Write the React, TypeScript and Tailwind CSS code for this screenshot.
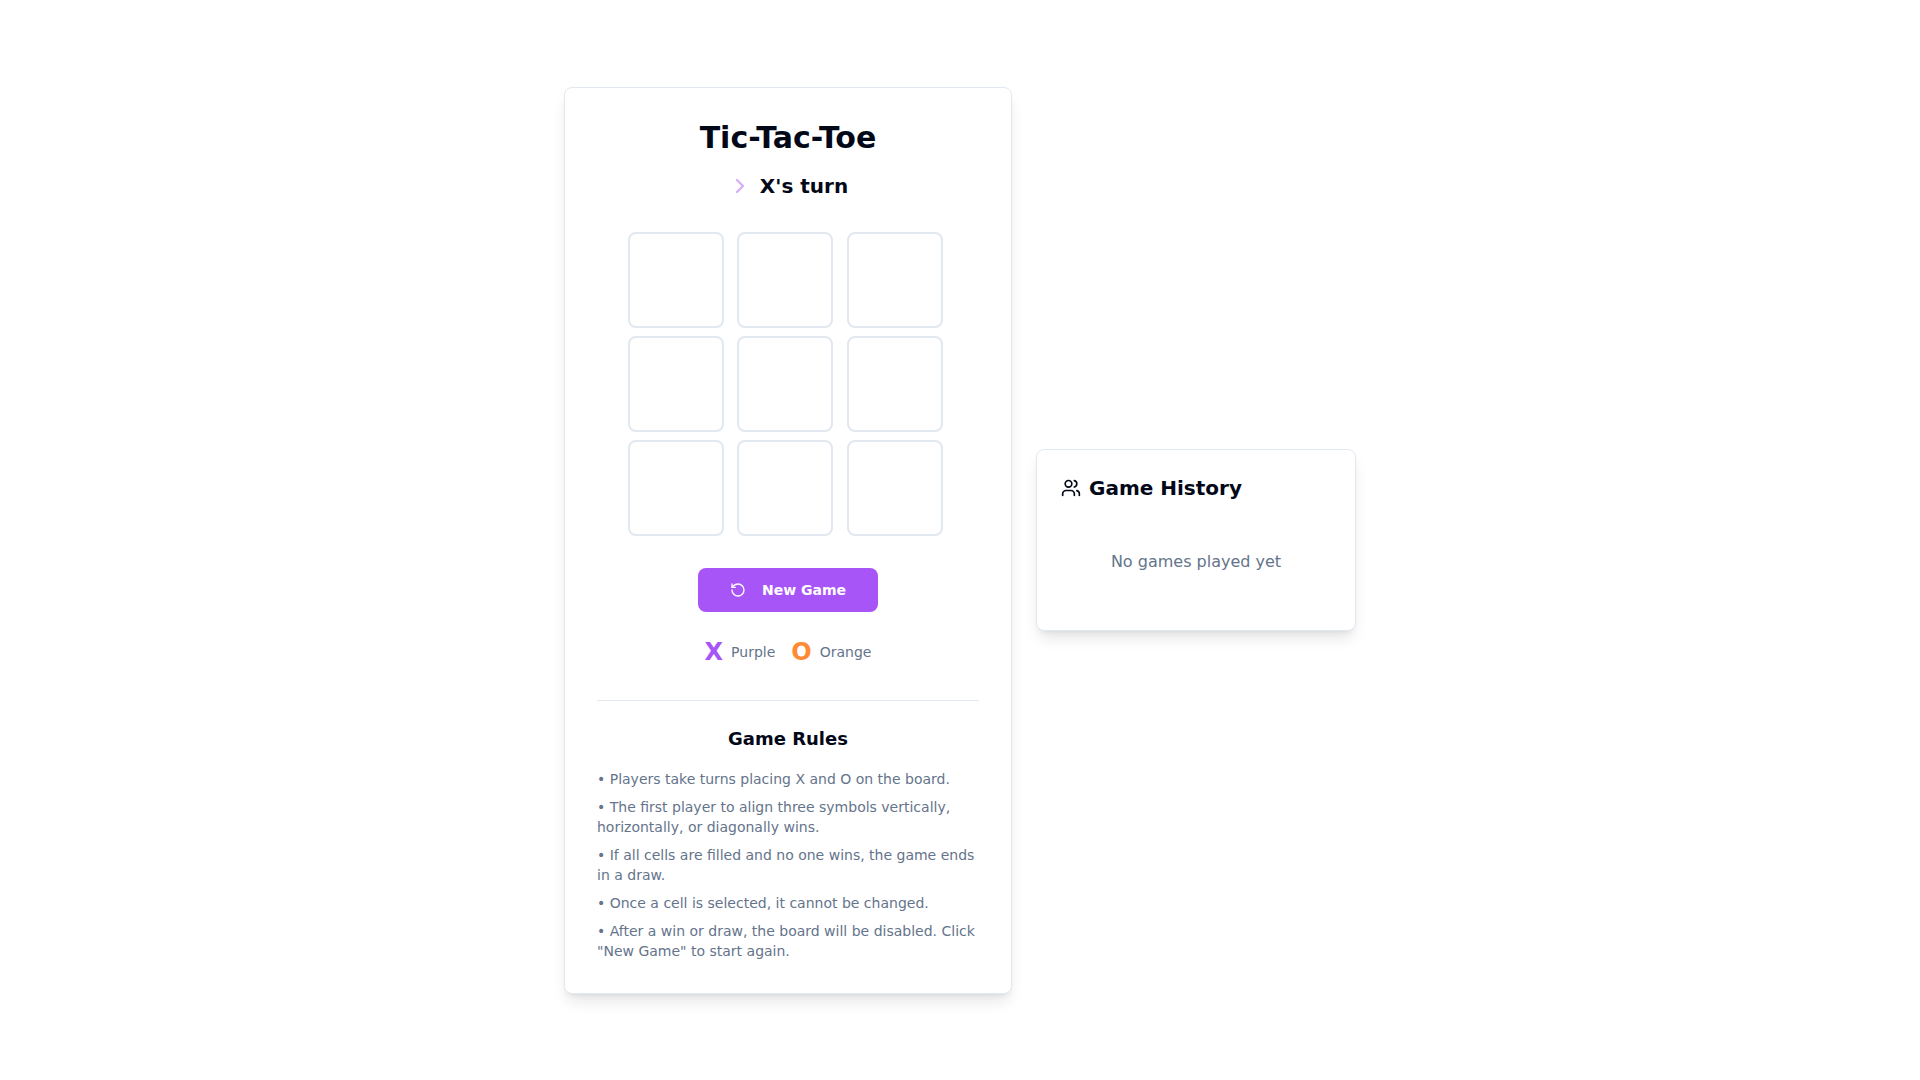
import { useState } from 'react'
import { ChevronRight, RotateCcw, Users } from 'lucide-react'

type Player = 'X' | 'O'
type Cell = Player | null

const LINES = [
  [0, 1, 2],
  [3, 4, 5],
  [6, 7, 8],
  [0, 3, 6],
  [1, 4, 7],
  [2, 5, 8],
  [0, 4, 8],
  [2, 4, 6]
]

const RULES = [
  'Players take turns placing X and O on the board.',
  'The first player to align three symbols vertically, horizontally, or diagonally wins.',
  'If all cells are filled and no one wins, the game ends in a draw.',
  'Once a cell is selected, it cannot be changed.',
  'After a win or draw, the board will be disabled. Click "New Game" to start again.'
]

const emptyBoard = (): Cell[] => Array(9).fill(null)

function getWinner(board: Cell[]): Cell {
  for (const [a, b, c] of LINES) {
    if (board[a] && board[a] === board[b] && board[a] === board[c]) return board[a]
  }
  return null
}

function Legend() {
  return (
    <div className="mt-6 flex items-center justify-center gap-4 text-sm text-[#64748b]">
      <div className="flex items-center gap-2">
        <span className="text-2xl font-bold text-[#a855f7]">X</span>
        <span>Purple</span>
      </div>
      <div className="flex items-center gap-2">
        <span className="text-2xl font-bold text-[#ff8a33]">O</span>
        <span>Orange</span>
      </div>
    </div>
  )
}

function GameRules() {
  return (
    <section className="mt-8 border-t border-[#e2e8f0] pt-6">
      <h2 className="mb-4 text-center text-lg font-semibold">Game Rules</h2>
      <ul className="space-y-2 text-sm text-[#64748b]">
        {RULES.map((rule) => (
          <li key={rule}>{`• ${rule}`}</li>
        ))}
      </ul>
    </section>
  )
}

function GameHistory({ history }: { history: string[] }) {
  return (
    <aside className="w-80 rounded-lg border border-[#e2e8f0] bg-white p-6 shadow-lg">
      <h2 className="mb-4 flex items-center gap-2 text-xl font-semibold">
        <Users className="h-5 w-5" />
        Game History
      </h2>
      {history.length === 0 ? (
        <p className="py-8 text-center text-[#64748b]">No games played yet</p>
      ) : (
        <ul className="space-y-2 text-sm text-[#64748b]">
          {history.map((entry, i) => (
            <li key={i}>{entry}</li>
          ))}
        </ul>
      )}
    </aside>
  )
}

export default function App() {
  const [board, setBoard] = useState<Cell[]>(emptyBoard)
  const [turn, setTurn] = useState<Player>('X')
  const [history, setHistory] = useState<string[]>([])

  const winner = getWinner(board)
  const isDraw = !winner && board.every(Boolean)
  const isOver = Boolean(winner) || isDraw

  const play = (index: number) => {
    if (board[index] || isOver) return
    const next = [...board]
    next[index] = turn
    setBoard(next)
    setTurn(turn === 'X' ? 'O' : 'X')

    const won = getWinner(next)
    if (won) {
      setHistory([...history, `${won} won`])
    } else if (next.every(Boolean)) {
      setHistory([...history, 'Draw'])
    }
  }

  const reset = () => {
    setBoard(emptyBoard())
    setTurn('X')
  }

  let status = `${turn}'s turn`
  if (winner) status = `${winner} wins!`
  if (isDraw) status = "It's a draw!"

  return (
    <main className="flex min-h-screen flex-col items-center justify-center gap-6 bg-white p-4 font-['DejaVu_Sans',sans-serif] text-[#020817] lg:flex-row">
      <div className="w-full max-w-md rounded-lg border border-[#e2e8f0] bg-white p-8 shadow-lg">
        <h1 className="mb-4 text-center text-3xl font-bold">Tic-Tac-Toe</h1>
        <div className="mb-8 flex items-center justify-center gap-2">
          {!isOver && <ChevronRight className="h-6 w-6 text-[#a855f7] opacity-50" />}
          <p className="text-xl font-semibold">{status}</p>
        </div>

        <div className="mx-auto grid max-w-xs grid-cols-3 gap-2">
          {board.map((cell, i) => (
            <button
              key={i}
              type="button"
              aria-label={`Cell ${i + 1}`}
              onClick={() => play(i)}
              disabled={isOver}
              className={`h-24 w-24 rounded-lg border-2 border-[#e2e8f0] bg-white text-4xl font-bold ${
                cell === 'X' ? 'text-[#a855f7]' : 'text-[#ff8a33]'
              }`}
            >
              {cell}
            </button>
          ))}
        </div>

        <div className="mt-8 flex justify-center">
          <button
            type="button"
            onClick={reset}
            className="flex h-11 items-center gap-4 rounded-lg bg-[#a855f7] px-8 text-sm font-semibold text-white hover:bg-[#9333ea]"
          >
            <RotateCcw className="h-4 w-4" />
            New Game
          </button>
        </div>

        <Legend />
        <GameRules />
      </div>

      <GameHistory history={history} />
    </main>
  )
}
